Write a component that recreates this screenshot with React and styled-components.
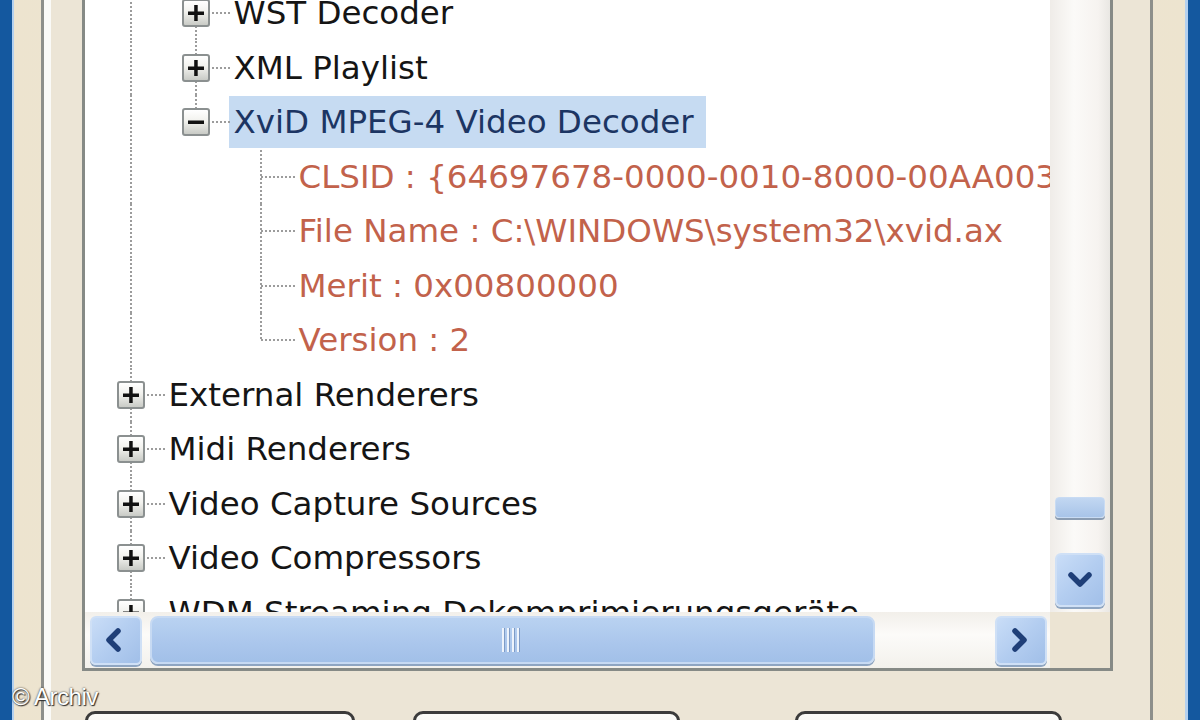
import styled, { createGlobalStyle } from 'styled-components';

const GlobalStyle = createGlobalStyle`
    html, body {
        margin: 0;
        padding: 0;
        overflow: hidden;
    }
`;

const ROW = 54.5;
const COL = 65;

const rows = [
    { text: 'WST Decoder', guides: ['line', 'plus-full'] },
    { text: 'XML Playlist', guides: ['line', 'plus-full'] },
    { text: 'XviD MPEG-4 Video Decoder', guides: ['line', 'minus-last'], selected: true },
    { text: 'CLSID : {64697678-0000-0010-8000-00AA003', guides: ['line', 'blank', 'tee'], detail: true },
    { text: 'File Name : C:\\WINDOWS\\system32\\xvid.ax', guides: ['line', 'blank', 'tee'], detail: true },
    { text: 'Merit : 0x00800000', guides: ['line', 'blank', 'tee'], detail: true },
    { text: 'Version : 2', guides: ['line', 'blank', 'corner'], detail: true },
    { text: 'External Renderers', guides: ['plus-full'] },
    { text: 'Midi Renderers', guides: ['plus-full'] },
    { text: 'Video Capture Sources', guides: ['plus-full'] },
    { text: 'Video Compressors', guides: ['plus-full'] },
    { text: 'WDM Streaming Dekomprimierungsgeräte', guides: ['plus-full'] },
];

const Chevron = ({ dir }) => {
    const pts = {
        left: '15,4 6,13 15,22',
        right: '7,4 16,13 7,22',
        down: '4,8 13,17 22,8',
    }[dir];
    return (
        <svg width="26" height="26" viewBox="0 0 26 26">
            <polyline points={pts} fill="none" stroke="#1f3f78" strokeWidth="5.5" strokeLinecap="round" strokeLinejoin="round" />
        </svg>
    );
};

const Expander = ({ open }) => (
    <ExpBox>
        <svg width="16" height="16" viewBox="0 0 16 16">
            <rect x="0" y="6.5" width="16" height="3.5" fill="#111" />
            {!open && <rect x="6.2" y="0" width="3.5" height="16" fill="#111" />}
        </svg>
    </ExpBox>
);

const Guide = ({ kind }) => {
    if (kind === 'blank') return <GuideCell />;
    if (kind === 'line') return <GuideCell $top $bottom />;
    if (kind === 'tee') return <GuideCell $top $bottom $right />;
    if (kind === 'corner') return <GuideCell $top $right />;
    const open = kind.startsWith('minus');
    const last = kind.endsWith('last');
    return (
        <GuideCell $top $bottom={!last} $right>
            <Expander open={open} />
        </GuideCell>
    );
};

const App = () => {
    return (
        <>
            <GlobalStyle />
            <Window>
                <Frame>
                    <Page>
                        <Tree>
                            <Content>
                                <List>
                                    {rows.map((r) => (
                                        <Row key={r.text}>
                                            {r.guides.map((g, i) => (
                                                <Guide key={i} kind={g} />
                                            ))}
                                            <Label $selected={r.selected} $detail={r.detail}>
                                                {r.text}
                                            </Label>
                                        </Row>
                                    ))}
                                </List>
                            </Content>
                            <VScroll>
                                <VThumb />
                                <ScrollBtn $w={50} $h={54}>
                                    <Chevron dir="down" />
                                </ScrollBtn>
                            </VScroll>
                            <HScroll>
                                <ScrollBtn $w={52} $h={49}>
                                    <Chevron dir="left" />
                                </ScrollBtn>
                                <HThumb>
                                    <Grip>
                                        <span /><span /><span /><span />
                                    </Grip>
                                </HThumb>
                                <ScrollBtn $w={52} $h={49}>
                                    <Chevron dir="right" />
                                </ScrollBtn>
                            </HScroll>
                            <Corner />
                        </Tree>
                        <ButtonRow>
                            <DlgButton $w={270} />
                            <DlgButton $w={267} $gap={58} />
                            <DlgButton $w={267} $gap={115} />
                        </ButtonRow>
                    </Page>
                </Frame>
                <Watermark>© Archiv</Watermark>
            </Window>
        </>
    );
};

export default App;

const Window = styled.div`
    position: relative;
    width: 1200px;
    height: 720px;
    box-sizing: border-box;
    display: flex;
    border-left: 12px solid #14589f;
    border-right: 12px solid #14589f;
    background: #ebe4d4;
    overflow: hidden;
`;

const Frame = styled.div`
    flex: 1;
    display: flex;
    border-left: 2px solid #b3d0ef;
    border-right: 3px solid #b3d0ef;
    padding: 0 32px 0 27px;
    background: linear-gradient(to right, #ede4cf, #ebe5d8 50%, #ede4cf);
`;

const Page = styled.div`
    flex: 1;
    display: flex;
    flex-direction: column;
    border-left: 3px solid #8d8f8a;
    border-right: 3px solid #8d8f8a;
    box-shadow: inset 7px 0 0 #fafaf7;
    padding: 0 37px 0 38px;
    background: #ece5d6;
`;

const Tree = styled.div`
    height: 671px;
    flex-shrink: 0;
    box-sizing: border-box;
    border: 3px solid #868a86;
    border-top: none;
    background: #fff;
    display: grid;
    grid-template-columns: 1fr 60px;
    grid-template-rows: 1fr 56px;
`;

const Content = styled.div`
    overflow: hidden;
    position: relative;
`;

const List = styled.div`
    margin-top: -14px;
    padding-left: 13.5px;
`;

const Row = styled.div`
    height: ${ROW}px;
    display: flex;
    align-items: center;
    white-space: nowrap;
`;

const GuideCell = styled.div`
    position: relative;
    flex-shrink: 0;
    width: ${COL}px;
    height: 100%;
    display: flex;
    align-items: center;
    justify-content: center;

    &::before {
        content: '';
        position: absolute;
        left: ${COL / 2 - 1}px;
        width: 2px;
        top: ${(p) => (p.$top ? '0' : '50%')};
        bottom: ${(p) => (p.$bottom ? '0' : '50%')};
        display: ${(p) => (p.$top || p.$bottom ? 'block' : 'none')};
        background-image: linear-gradient(to bottom, #9c9c9c 50%, transparent 50%);
        background-size: 2px 4px;
    }

    &::after {
        content: '';
        position: absolute;
        left: ${COL / 2}px;
        right: -2px;
        top: calc(50% - 1px);
        height: 2px;
        display: ${(p) => (p.$right ? 'block' : 'none')};
        background-image: linear-gradient(to right, #9c9c9c 50%, transparent 50%);
        background-size: 4px 2px;
    }
`;

const ExpBox = styled.div`
    position: relative;
    z-index: 1;
    width: 24px;
    height: 24px;
    border: 2px solid #8b9090;
    border-radius: 3px;
    background: linear-gradient(to bottom, #ffffff 0%, #f2f2ee 45%, #c9cbc6 100%);
    display: flex;
    align-items: center;
    justify-content: center;
`;

const Label = styled.span`
    margin-left: ${(p) => (p.$selected ? '0' : '5px')};
    padding: ${(p) => (p.$selected ? '0 12px 0 5px' : '0')};
    height: ${(p) => (p.$selected ? '52px' : 'auto')};
    display: flex;
    align-items: center;
    font-family: "DejaVu Sans", Verdana, sans-serif;
    font-size: 32.5px;
    color: ${(p) => (p.$detail ? '#c2624b' : p.$selected ? '#1c3563' : '#151515')};
    background: ${(p) => (p.$selected ? '#c6dbf2' : 'transparent')};
`;

const VScroll = styled.div`
    display: flex;
    flex-direction: column;
    justify-content: flex-end;
    align-items: center;
    padding-bottom: 5px;
    background: linear-gradient(to right, #efece8, #fbfaf8 40%, #f6f3f0 80%, #e9e7e3);
`;

const VThumb = styled.div`
    width: 48px;
    height: 19px;
    margin-bottom: 35px;
    border-radius: 4px;
    background: linear-gradient(to bottom, #c2d7f2, #a8c4e8);
    border: 1px solid #c8dbf3;
    box-shadow: 0 2px 0 #8a9cb2;
`;

const HScroll = styled.div`
    display: flex;
    align-items: center;
    padding: 0 3px 0 5px;
    background: linear-gradient(to bottom, #f2efea, #fcfbf9 40%, #f3f1ec);
`;

const ScrollBtn = styled.div`
    width: ${(p) => p.$w}px;
    height: ${(p) => p.$h}px;
    box-sizing: border-box;
    flex-shrink: 0;
    border-radius: 6px;
    border: 2px solid #cfe0f6;
    background: linear-gradient(135deg, #c9ddf7 0%, #b3cdf0 50%, #a1bfe8 100%);
    box-shadow: 0 2px 0 #8fa6c2;
    display: flex;
    align-items: center;
    justify-content: center;
`;

const HThumb = styled.div`
    width: 725px;
    height: 48px;
    box-sizing: border-box;
    margin: 0 auto 0 8px;
    border-radius: 8px;
    border: 2px solid #c7daf3;
    background: linear-gradient(to bottom, #b9d2f1, #aac6ec 60%, #a2c0e8);
    box-shadow: 0 2px 0 #8ea5c2;
    display: flex;
    align-items: center;
    justify-content: center;
    padding-right: 5px;
`;

const Grip = styled.div`
    display: flex;
    gap: 3px;

    span {
        width: 2px;
        height: 24px;
        background: #eef4fc;
        box-shadow: 1px 0 0 #7f9cc6;
    }
`;

const Corner = styled.div`
    background: #ece4d3;
`;

const ButtonRow = styled.div`
    display: flex;
    padding-left: 3px;
    margin-top: 40px;
`;

const DlgButton = styled.div`
    width: ${(p) => p.$w}px;
    margin-left: ${(p) => p.$gap || 0}px;
    height: 60px;
    flex-shrink: 0;
    box-sizing: border-box;
    border: 3px solid #3b3b3b;
    border-radius: 10px;
    background: linear-gradient(to bottom, #fbfbf8, #eeebe2);
`;

const Watermark = styled.div`
    position: absolute;
    left: 0;
    top: 683px;
    font-family: "Liberation Sans", Arial, sans-serif;
    font-size: 24px;
    color: #ffffff;
    text-shadow: 0 0 2px #222, 1px 1px 1px #333;
    letter-spacing: -0.5px;
`;
